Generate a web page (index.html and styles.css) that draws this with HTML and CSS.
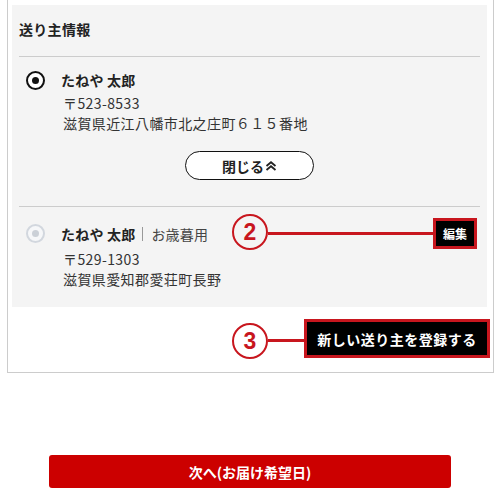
FILE: index.html
```html
<!DOCTYPE html>
<html lang="ja">
<head>
<meta charset="utf-8">
<link rel="stylesheet" href="styles.css">
</head>
<body>
<div class="frame">
  <div class="panel">
    <div class="title">送り主情報</div>
    <div class="item first">
      <div class="row">
        <span class="radio checked"></span>
        <span class="name">たねや 太郎</span>
      </div>
      <div class="details">
        <div class="line postal">〒523-8533</div>
        <div class="line">滋賀県近江八幡市北之庄町６１５番地</div>
      </div>
      <div class="close-wrap">
        <button class="close-btn">閉じる<svg class="chev" width="12" height="10" viewBox="0 0 12 10"><path d="M1.5 5 L6 1.2 L10.5 5 M1.5 9 L6 5.2 L10.5 9" fill="none" stroke="#222" stroke-width="1.8"/></svg></button>
      </div>
    </div>
    <div class="item second">
      <div class="row">
        <span class="radio disabled"></span>
        <span class="name">たねや 太郎</span><span class="sep"></span><span class="tag">お歳暮用</span>
        <button class="edit-btn">編集</button>
      </div>
      <div class="details">
        <div class="line postal">〒529-1303</div>
        <div class="line">滋賀県愛知郡愛荘町長野</div>
      </div>
    </div>
  </div>
  <div class="footer">
    <button class="add-btn">新しい送り主を登録する</button>
  </div>
</div>
<div class="next-wrap">
  <button class="next-btn">次へ(お届け希望日)</button>
</div>

<div class="callout c2"><span>2</span></div>
<div class="callout-line l2"></div>
<div class="callout c3"><span>3</span></div>
<div class="callout-line l3"></div>
</body>
</html>
```
FILE: styles.css
```css
body {
  margin: 0;
  font-family: "Noto Sans CJK JP", sans-serif;
  color: #333;
  background: #fff;
  position: relative;
  width: 500px;
  height: 500px;
  overflow: hidden;
}
button {
  font-family: inherit;
  cursor: pointer;
}
.frame {
  margin-left: 7px;
  width: 487px;
  box-sizing: border-box;
  border: 1px solid #ccc;
  border-top: 0;
  padding: 5px 6px 0 4px;
}
.panel {
  background: #f4f4f4;
  padding: 0 7px 18px 7px;
}
.title {
  font-size: 14px;
  font-weight: bold;
  line-height: 20px;
  padding-top: 14px;
  padding-bottom: 17px;
  border-bottom: 1px solid #ccc;
  color: #222;
  letter-spacing: 0.3px;
}
.item.first {
  padding-top: 13px;
  padding-bottom: 26px;
}
.item.second {
  border-top: 1px solid #ccc;
  padding-top: 14px;
}
.row {
  display: flex;
  align-items: center;
  min-height: 20px;
  line-height: 20px;
}
.item.second .row {
  min-height: 25px;
}
.radio {
  box-sizing: border-box;
  width: 19px;
  height: 19px;
  border-radius: 50%;
  margin-left: 7px;
  margin-right: 16px;
  display: flex;
  align-items: center;
  justify-content: center;
  background: #fff;
}
.radio::after {
  content: "";
  width: 7px;
  height: 7px;
  border-radius: 50%;
}
.radio.checked {
  border: 2px solid #111;
}
.radio.checked::after {
  background: #111;
}
.radio.disabled {
  border: 2px solid #d2d7de;
  background: #f6f7f9;
}
.radio.disabled::after {
  background: #cbd0d7;
}
.name {
  font-size: 14px;
  font-weight: bold;
  color: #222;
  letter-spacing: 0.2px;
}
.sep {
  display: inline-block;
  width: 1px;
  height: 14px;
  background: #999;
  margin: 0 8px 0 7px;
}
.tag {
  font-size: 14px;
  color: #444;
  letter-spacing: 0.2px;
}
.details {
  padding-left: 44px;
  margin-top: 3px;
}
.line {
  font-size: 14px;
  line-height: 20px;
  color: #333;
  letter-spacing: 0.4px;
}
.close-wrap {
  display: flex;
  justify-content: center;
  margin-top: 18px;
}
.close-btn {
  width: 129px;
  height: 29px;
  border: 1px solid #111;
  border-radius: 15px;
  background: #fff;
  font-size: 14px;
  font-weight: bold;
  color: #222;
  display: flex;
  align-items: center;
  justify-content: center;
  padding: 0;
}
.chev {
  margin-left: 1px;
}
.edit-btn {
  margin-left: auto;
  margin-right: 6px;
  width: 38px;
  height: 25px;
  background: #000;
  color: #fff;
  border: 0;
  font-size: 12px;
  font-weight: bold;
  padding: 0;
  outline: 3px solid #c8161e;
}
.footer {
  display: flex;
  justify-content: flex-end;
  padding-top: 15px;
  padding-bottom: 17px;
}
.add-btn {
  width: 180px;
  height: 33px;
  background: #000;
  color: #fff;
  border: 0;
  font-size: 14px;
  font-weight: bold;
  letter-spacing: 0.5px;
  padding: 0;
  outline: 3px solid #c8161e;
}
.next-wrap {
  padding: 82px 49px 0 49px;
}
.next-btn {
  width: 402px;
  height: 33px;
  background: #cc0000;
  border: 0;
  border-radius: 3px;
  color: #fff;
  font-size: 14px;
  font-weight: bold;
  padding: 0;
}
.callout {
  position: absolute;
  box-sizing: border-box;
  width: 36px;
  height: 36px;
  border: 2px solid #c8161e;
  border-radius: 50%;
  display: flex;
  align-items: center;
  justify-content: center;
  font-family: "Liberation Sans", sans-serif;
  font-weight: bold;
  font-size: 23px;
  line-height: 1;
  color: #c8161e;
}
.c2 { left: 232px; top: 214px; }
.c3 { left: 232px; top: 323px; }
.callout-line {
  position: absolute;
  height: 3px;
  background: #c8161e;
}
.l2 { left: 268px; top: 232px; width: 165px; }
.l3 { left: 268px; top: 339px; width: 36px; }
```
